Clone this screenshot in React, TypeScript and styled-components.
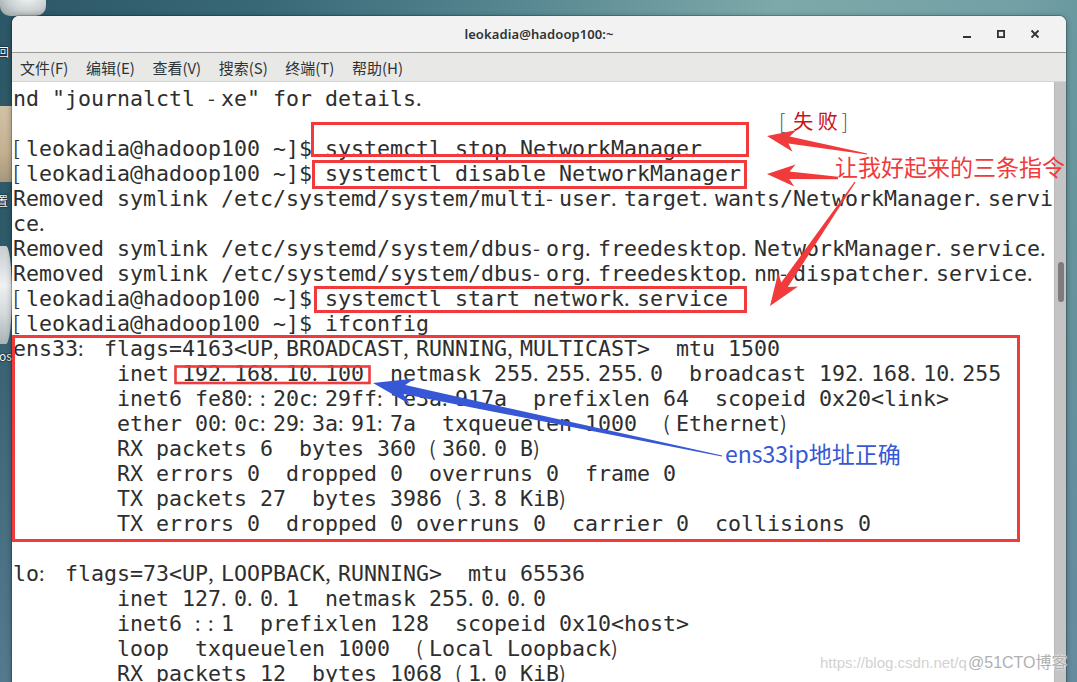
import React from "react";
import styled, { createGlobalStyle } from "styled-components";

const GlobalStyle = createGlobalStyle`
  html, body { margin: 0; padding: 0; width: 1077px; height: 682px; overflow: hidden; }
  body { font-family: "Noto Sans", "Noto Sans CJK SC", sans-serif; }
  #root { width: 1077px; height: 682px; }
`;

const Desktop = styled.div`
  position: relative;
  width: 1077px;
  height: 682px;
  overflow: hidden;
  background:
    linear-gradient(180deg, rgba(112, 140, 165, 0) 35%, rgba(108, 140, 165, 0.6) 100%),
    linear-gradient(100deg, #2c5766 0%, #386877 22%, #5a8a93 45%, #7ea9aa 65%, #72a0a5 85%, #5d8b97 100%);
`;

/* ---------- desktop icons (free canvas) ---------- */
const DeskIcon = styled.div<{ $top: number; $h: number; $w: number; $bg: string; $radius?: string }>`
  position: absolute;
  left: 0;
  top: ${(p) => p.$top}px;
  width: ${(p) => p.$w}px;
  height: ${(p) => p.$h}px;
  background: ${(p) => p.$bg};
  border-radius: ${(p) => p.$radius || "0"};
`;

const DeskLabel = styled.div<{ $top: number; $left: number }>`
  position: absolute;
  left: ${(p) => p.$left}px;
  top: ${(p) => p.$top}px;
  font-family: "Noto Sans CJK SC", "Noto Sans", sans-serif;
  font-size: 12px;
  line-height: 14px;
  color: #ffffff;
  text-shadow: 0 0 2px #000, 0 0 1px #000;
  white-space: nowrap;
`;

/* ---------- window ---------- */
const Window = styled.div`
  position: absolute;
  left: 12px;
  top: 16px;
  width: 1054px;
  height: 700px;
  display: flex;
  flex-direction: column;
  border-radius: 7px 7px 0 0;
  overflow: hidden;
  background: #ffffff;
  box-shadow: 0 1px 6px rgba(0, 0, 0, 0.35), 0 0 0 1px rgba(0, 0, 0, 0.18);
`;

const TitleBar = styled.div`
  flex: none;
  height: 36px;
  display: grid;
  grid-template-columns: 1fr auto 1fr;
  align-items: center;
  background: #f2f2f2;
  border-bottom: 1px solid #9a9a9a;
`;

const Title = styled.div`
  grid-column: 2;
  font-family: "Noto Sans", sans-serif;
  font-size: 13px;
  font-weight: 600;
  color: #2e3436;
  letter-spacing: 0.1px;
`;

const Controls = styled.div`
  grid-column: 3;
  justify-self: end;
  display: flex;
  padding-right: 14px;
`;

const ControlButton = styled.div`
  width: 34px;
  height: 36px;
  display: flex;
  align-items: center;
  justify-content: center;
  color: #2e3436;
`;

const MenuBar = styled.div`
  flex: none;
  height: 28px;
  display: flex;
  align-items: center;
  gap: 17.5px;
  padding-left: 8px;
  background: #e8e8e7;
  border-bottom: 1px solid #d4d4d2;
  font-family: "Noto Sans CJK SC", "Noto Sans", sans-serif;
  font-size: 15px;
  color: #2e3436;
`;

const MenuItem = styled.span`
  white-space: nowrap;
`;

const Body = styled.div`
  flex: 1;
  min-height: 0;
  display: flex;
`;

const Terminal = styled.div`
  flex: 1;
  min-width: 0;
  padding: 3.5px 0 0 1px;
  background: #ffffff;
  font-family: "DejaVu Sans Mono", "Liberation Mono", monospace;
  font-size: 21.6px;
  line-height: 25px;
  color: #2e2e2e;
  overflow: hidden;
`;

const Line = styled.div`
  height: 25px;
  white-space: pre;
`;

/* punctuation drawn by the terminal's CJK fallback: small glyph at the left of its cell */
const Punct = styled.span`
  display: inline-block;
  width: 13px;
  text-align: left;
  font-family: "Noto Sans CJK SC", sans-serif;
  font-size: 20px;
  line-height: 20px;
  color: #333333;
`;

const ScrollTrack = styled.div`
  flex: none;
  width: 12px;
  background: #c4c4c4;
  border-left: 1px solid #b9b9b9;
  box-sizing: border-box;
  display: flex;
  flex-direction: column;
  align-items: center;
  padding-top: 180px;
`;

const ScrollThumb = styled.div`
  width: 6px;
  height: 40px;
  border-radius: 3px;
  background: #7c7c7c;
`;

/* ---------- annotation overlay ---------- */
const Overlay = styled.div`
  position: absolute;
  inset: 0;
  pointer-events: none;
`;

const Marks = styled.svg`
  position: absolute;
  left: 0;
  top: 0;
`;

const Note = styled.div<{ $x: number; $y: number; $color: string; $size: number }>`
  position: absolute;
  left: ${(p) => p.$x}px;
  top: ${(p) => p.$y}px;
  color: ${(p) => p.$color};
  font-size: ${(p) => p.$size}px;
  font-family: "Noto Sans CJK SC", "Noto Sans", sans-serif;
  line-height: 1;
  white-space: nowrap;
`;

const Bracket = styled.span<{ $gap: number; $side: "l" | "r" }>`
  color: #4a4a4a;
  font-weight: 300;
  ${(p) => (p.$side === "l" ? `margin-right: ${p.$gap}px;` : `margin-left: ${p.$gap}px;`)}
`;

const FailText = styled.span`
  color: #cc1111;
`;

const WatermarkUrl = styled.div`
  position: absolute;
  left: 820px;
  top: 654px;
  font-family: "Liberation Sans", Arial, sans-serif;
  font-size: 15px;
  line-height: 18px;
  color: #d2d2d2;
  white-space: nowrap;
`;

const WatermarkBrand = styled.div`
  position: absolute;
  left: 968px;
  top: 653px;
  font-family: "Liberation Sans", "Noto Sans CJK SC", sans-serif;
  font-size: 16px;
  line-height: 19px;
  color: #b0b0b0;
  text-shadow: 0 0 2px #ffffff, 0 0 1px #ffffff;
  white-space: nowrap;
`;

type P = [number, number];

function arrow(tail: P, tip: P, headLen: number, headHalf: number, neckHalf: number, tailHalf: number): string {
  const dx = tip[0] - tail[0];
  const dy = tip[1] - tail[1];
  const len = Math.hypot(dx, dy);
  const ux = dx / len;
  const uy = dy / len;
  const nx = -uy;
  const ny = ux;
  const bx = tip[0] - ux * headLen;
  const by = tip[1] - uy * headLen;
  const kx = tip[0] - ux * headLen * 0.8;
  const ky = tip[1] - uy * headLen * 0.8;
  const pts: P[] = [
    tip,
    [bx + nx * headHalf, by + ny * headHalf],
    [kx + nx * neckHalf, ky + ny * neckHalf],
    [tail[0] + nx * tailHalf, tail[1] + ny * tailHalf],
    [tail[0] - nx * tailHalf, tail[1] - ny * tailHalf],
    [kx - nx * neckHalf, ky - ny * neckHalf],
    [bx - nx * headHalf, by - ny * headHalf],
  ];
  return pts.map((p) => `${p[0].toFixed(1)},${p[1].toFixed(1)}`).join(" ");
}

const PUNCT = new Set([".", ",", ":", "-", "(", ")", "["]);

function renderLine(text: string): React.ReactNode[] {
  const out: React.ReactNode[] = [];
  let buf = "";
  for (let i = 0; i < text.length; i++) {
    const ch = text[i];
    if (PUNCT.has(ch)) {
      if (buf) out.push(buf);
      buf = "";
      out.push(<Punct key={i}>{ch}</Punct>);
    } else {
      buf += ch;
    }
  }
  if (buf) out.push(buf);
  if (out.length === 0) out.push(" ");
  return out;
}

const lines: string[] = [
  'nd "journalctl -xe" for details.',
  "",
  "[leokadia@hadoop100 ~]$ systemctl stop NetworkManager",
  "[leokadia@hadoop100 ~]$ systemctl disable NetworkManager",
  "Removed symlink /etc/systemd/system/multi-user.target.wants/NetworkManager.servi",
  "ce.",
  "Removed symlink /etc/systemd/system/dbus-org.freedesktop.NetworkManager.service.",
  "Removed symlink /etc/systemd/system/dbus-org.freedesktop.nm-dispatcher.service.",
  "[leokadia@hadoop100 ~]$ systemctl start network.service",
  "[leokadia@hadoop100 ~]$ ifconfig",
  "ens33: flags=4163<UP,BROADCAST,RUNNING,MULTICAST>  mtu 1500",
  "        inet 192.168.10.100  netmask 255.255.255.0  broadcast 192.168.10.255",
  "        inet6 fe80::20c:29ff:fe3a:917a  prefixlen 64  scopeid 0x20<link>",
  "        ether 00:0c:29:3a:91:7a  txqueuelen 1000  (Ethernet)",
  "        RX packets 6  bytes 360 (360.0 B)",
  "        RX errors 0  dropped 0  overruns 0  frame 0",
  "        TX packets 27  bytes 3986 (3.8 KiB)",
  "        TX errors 0  dropped 0 overruns 0  carrier 0  collisions 0",
  "",
  "lo: flags=73<UP,LOOPBACK,RUNNING>  mtu 65536",
  "        inet 127.0.0.1  netmask 255.0.0.0",
  "        inet6 ::1  prefixlen 128  scopeid 0x10<host>",
  "        loop  txqueuelen 1000  (Local Loopback)",
  "        RX packets 12  bytes 1068 (1.0 KiB)",
];

const menus = ["文件(F)", "编辑(E)", "查看(V)", "搜索(S)", "终端(T)", "帮助(H)"];

const RED = "#f03a3b";
const BLUE = "#3657d6";

export default function App() {
  return (
    <>
      <GlobalStyle />
      <Desktop>
        <DeskIcon $top={-12} $h={28} $w={46} $bg="radial-gradient(ellipse at 60% 30%, #f4f6f6 0%, #c9cfd0 55%, #8f9a9c 100%)" $radius="0 0 10px 10px" />
        <DeskLabel $top={45} $left={-3}>回</DeskLabel>
        <DeskIcon $top={106} $h={76} $w={12} $bg="linear-gradient(180deg, #d2c2a6 0%, #c4b192 60%, #a8977c 100%)" />
        <DeskLabel $top={194} $left={-4}>置</DeskLabel>
        <DeskIcon $top={246} $h={98} $w={12} $bg="linear-gradient(180deg, #c7cdd0 0%, #eef0f1 40%, #d3d8da 70%, #aab3b7 100%)" $radius="0 50% 50% 0" />
        <DeskLabel $top={349} $left={-1}>os</DeskLabel>

        <Window>
          <TitleBar>
            <Title>leokadia@hadoop100:~</Title>
            <Controls>
              <ControlButton>
                <svg width="10" height="10" viewBox="0 0 10 10">
                  <rect x="1" y="7" width="8" height="2" fill="currentColor" />
                </svg>
              </ControlButton>
              <ControlButton>
                <svg width="10" height="10" viewBox="0 0 10 10">
                  <rect x="1.9" y="1.9" width="6.2" height="6.2" fill="none" stroke="currentColor" strokeWidth="1.8" />
                </svg>
              </ControlButton>
              <ControlButton>
                <svg width="10" height="10" viewBox="0 0 10 10">
                  <path d="M1.5 1.5 L8.5 8.5 M8.5 1.5 L1.5 8.5" stroke="currentColor" strokeWidth="1.8" />
                </svg>
              </ControlButton>
            </Controls>
          </TitleBar>
          <MenuBar>
            {menus.map((m) => (
              <MenuItem key={m}>{m}</MenuItem>
            ))}
          </MenuBar>
          <Body>
            <Terminal>
              {lines.map((l, i) => (
                <Line key={i}>{renderLine(l)}</Line>
              ))}
            </Terminal>
            <ScrollTrack>
              <ScrollThumb />
            </ScrollTrack>
          </Body>
        </Window>

        <Overlay>
          <Marks width="1077" height="682" viewBox="0 0 1077 682">
            <g fill="none" stroke={RED} strokeWidth="3">
              <rect x="312.5" y="123.5" width="435" height="32" />
              <rect x="313.5" y="161.5" width="432" height="26" />
              <rect x="315.5" y="287.5" width="430" height="24" />
              <rect x="13.5" y="336.5" width="1005" height="204" />
              <rect x="175.5" y="366.5" width="194" height="16.5" strokeWidth="2.6" />
            </g>
            <g fill={RED}>
              <polygon points={arrow([867, 154], [767, 136], 28, 11, 3.5, 0.6)} />
              <polygon points={arrow([838, 178], [767, 174], 28, 11, 3.8, 1.2)} />
              <polygon points={arrow([855, 182], [770, 306], 32, 12, 4, 0.6)} />
            </g>
            <polygon fill={BLUE} points={arrow([722, 456], [373, 383], 40, 13, 4.5, 0.5)} />
          </Marks>
          <Note $x={779} $y={111} $color="#cc1111" $size={20}>
            <Bracket $side="l" $gap={8}>[</Bracket>
            <FailText>失 败</FailText>
            <Bracket $side="r" $gap={4}>]</Bracket>
          </Note>
          <Note $x={835} $y={155} $color={RED} $size={23}>
            让我好起来的三条指令
          </Note>
          <Note $x={725} $y={442} $color={BLUE} $size={23}>
            ens33ip地址正确
          </Note>
          <WatermarkUrl>https://blog.csdn.net/q</WatermarkUrl>
          <WatermarkBrand>@51CTO博客</WatermarkBrand>
        </Overlay>
      </Desktop>
    </>
  );
}
